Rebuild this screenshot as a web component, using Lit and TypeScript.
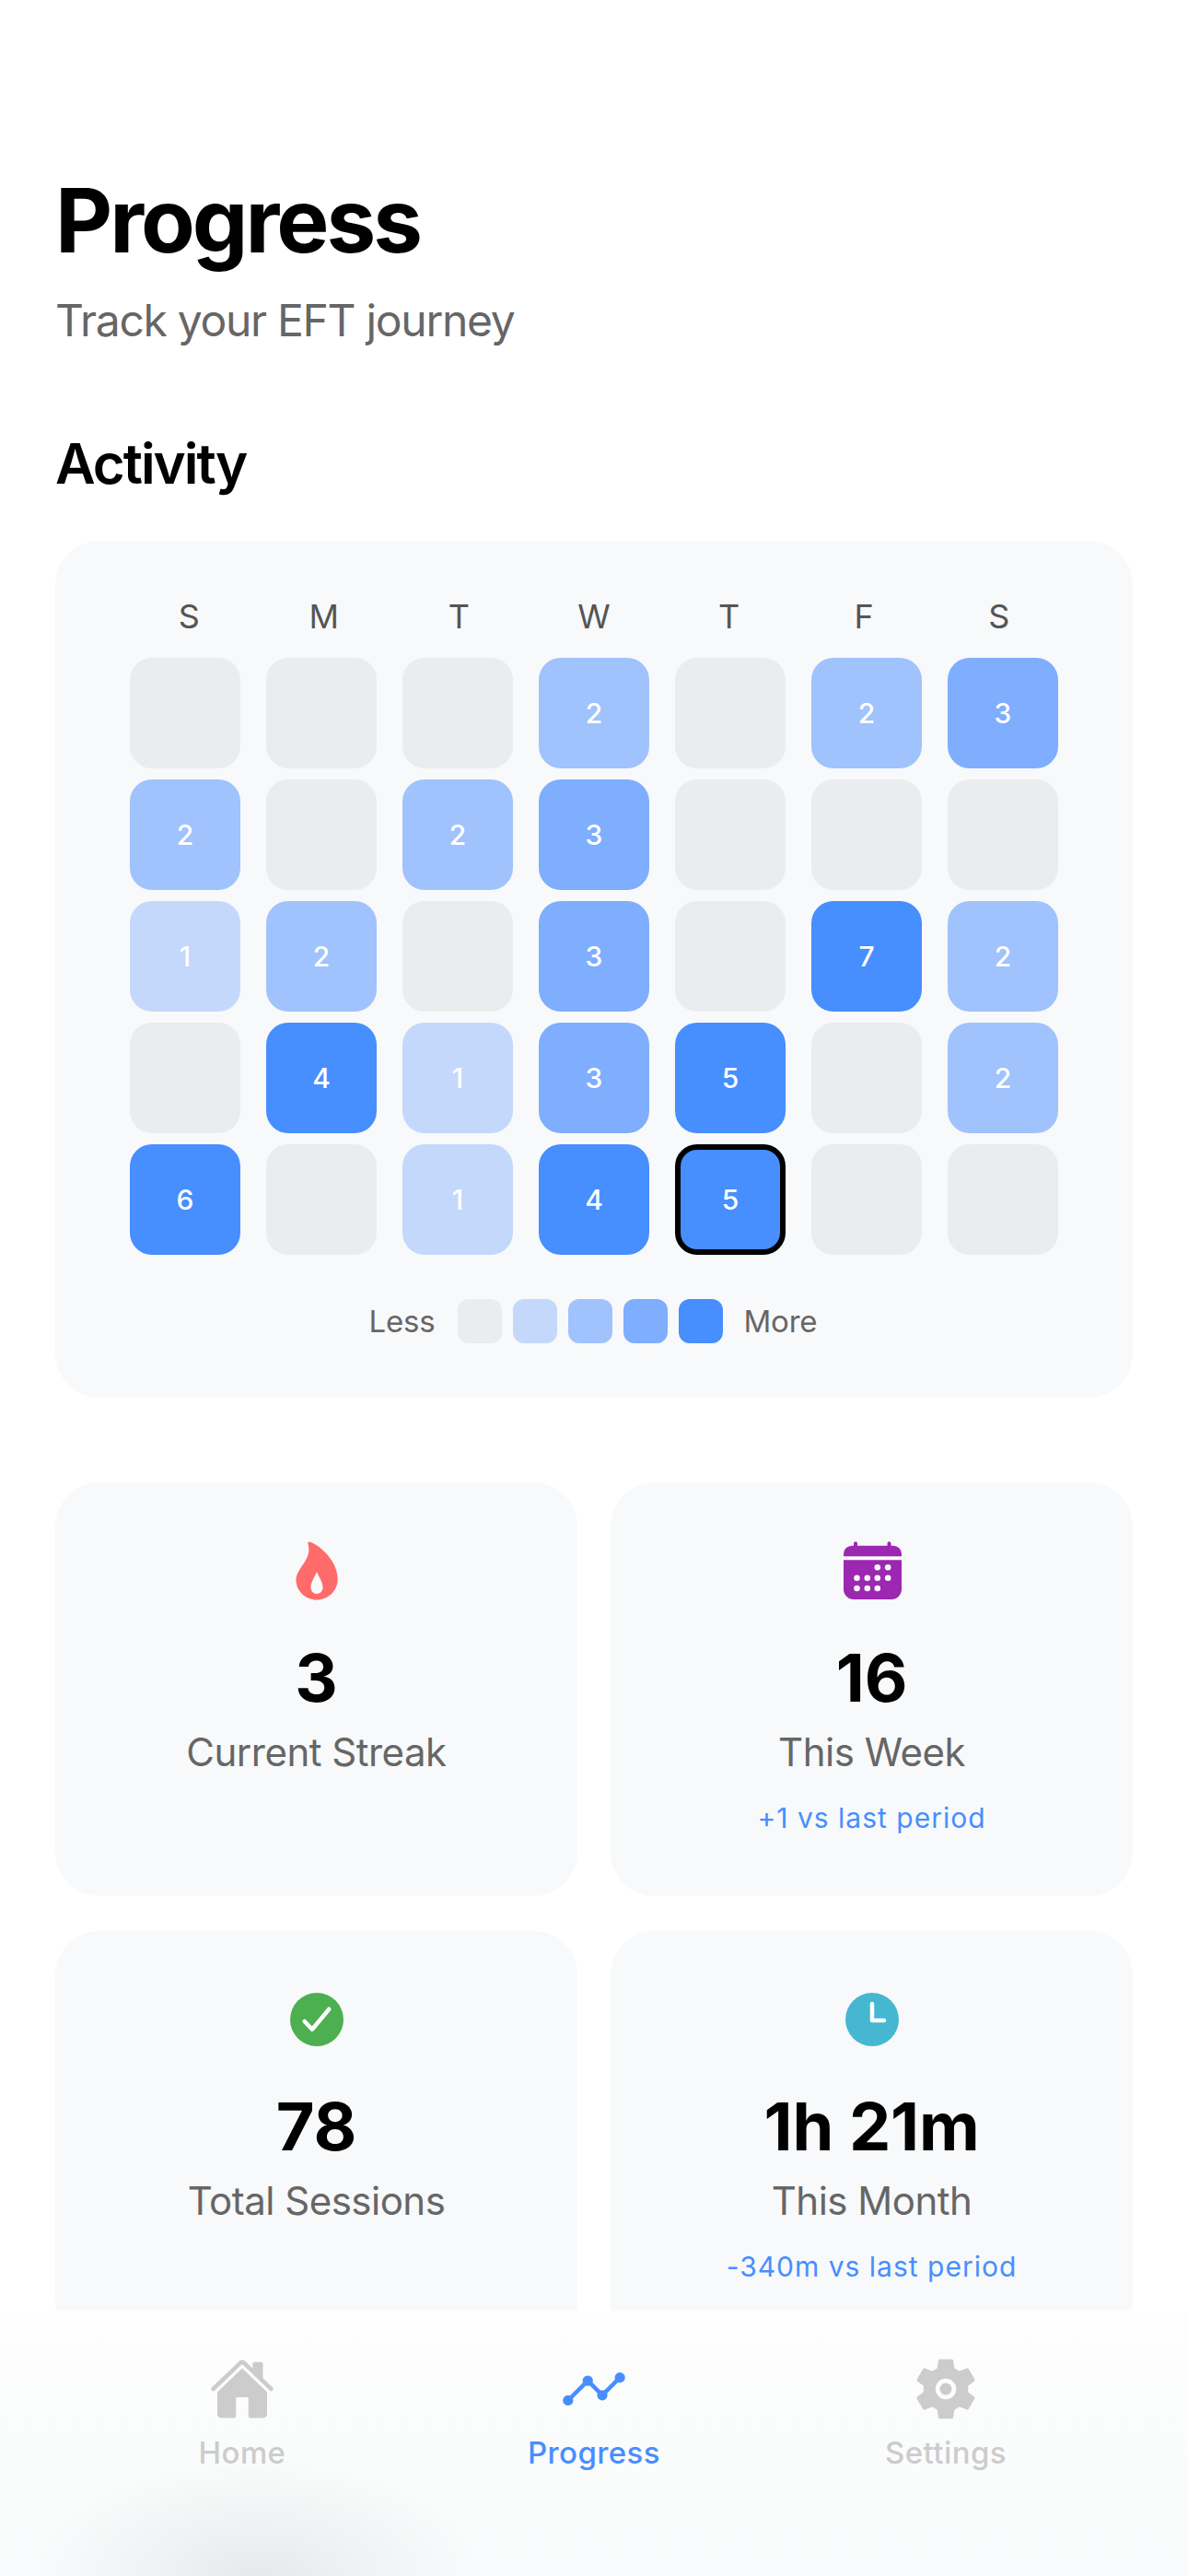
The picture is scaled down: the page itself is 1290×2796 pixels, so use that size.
import { LitElement, css, html, svg } from 'lit';
import { customElement } from 'lit/decorators.js';

const days = ['S', 'M', 'T', 'W', 'T', 'F', 'S'];

const weeks = [
  [0, 0, 0, 2, 0, 2, 3],
  [2, 0, 2, 3, 0, 0, 0],
  [1, 2, 0, 3, 0, 7, 2],
  [0, 4, 1, 3, 5, 0, 2],
  [6, 0, 1, 4, 5, 0, 0],
];

const level = (n: number) => (n > 3 ? 4 : n);

const flame = svg`<path fill="#ff6b6b" fill-rule="evenodd" d="M27 4.5C33 4 58.7 22 58.7 45C58.7 58 48 67.5 36 67.5C24 67.5 13.5 58 13.5 46C13.5 33 30 25 27 9C26.6 6.5 26 4.8 27 4.5ZM36 37C34 42 29.5 48 29.5 54C29.5 58 32.5 61 36 61C39.5 61 42.5 58 42.5 54C42.5 48 38 42 36 37Z"/>`;

const calendarDots = [
  [41.8, 32.3], [53.2, 32.3],
  [19.5, 43.7], [30.8, 43.7], [41.8, 43.7], [53.2, 43.7],
  [19.5, 55], [30.8, 55], [41.8, 55],
];
const calendar = svg`
  <path fill="#9c27b0" d="M5 20.3V17.7A9 9 0 0 1 14 8.7H16V6.3A2 2 0 0 1 20 6.3V8.7H52.5V6.3A2 2 0 0 1 56.5 6.3V8.7H59A9 9 0 0 1 68 17.7V20.3Z"/>
  <path fill="#9c27b0" d="M5 24.3H68V56A11 11 0 0 1 57 67H16A11 11 0 0 1 5 56Z"/>
  ${calendarDots.map(([x, y]) => svg`<circle cx=${x} cy=${y} r="3.3" fill="#f8f9fa"/>`)}
`;

const check = svg`
  <circle cx="36" cy="36" r="29" fill="#4caf50"/>
  <path d="M22.7 38L31 46.7L49.3 24.7" fill="none" stroke="#fff" stroke-width="4.5" stroke-linecap="round" stroke-linejoin="round"/>
`;

const clock = svg`
  <circle cx="36" cy="36" r="29" fill="#45b7d1"/>
  <path d="M36 19V37H49" fill="none" stroke="#fff" stroke-width="4.5" stroke-linecap="round" stroke-linejoin="round"/>
`;

const stats = [
  { icon: flame, value: '3', label: 'Current Streak', change: '' },
  { icon: calendar, value: '16', label: 'This Week', change: '+1 vs last period' },
  { icon: check, value: '78', label: 'Total Sessions', change: '' },
  { icon: clock, value: '1h 21m', label: 'This Month', change: '-340m vs last period' },
];

const homeIcon = svg`
  <path d="M261.56 101.28a8 8 0 00-11.06 0L66.4 277.15a8 8 0 00-2.47 5.79L63.9 448a32 32 0 0032 32H192a16 16 0 0016-16V328a8 8 0 018-8h80a8 8 0 018 8v136a16 16 0 0016 16h96.06a32 32 0 0032-32V282.94a8 8 0 00-2.47-5.79z"/>
  <path d="M490.91 244.15l-74.8-71.56V64a16 16 0 00-16-16h-48a16 16 0 00-16 16v32l-57.92-55.38C272.77 35.14 264.71 32 256 32c-8.68 0-16.72 3.14-22.14 8.63l-212.7 203.5c-6.22 6-7 15.87-1.34 22.37A16 16 0 0043 267.56L250.5 69.28a8 8 0 0111.06 0l207.52 198.28a16 16 0 0022.59-.44c6.14-6.36 5.63-16.86-.76-22.97z"/>
`;

const chartIcon = svg`
  <path d="M344 280l88-88M232 216l64 64M80 320l104-104" fill="none" stroke="currentColor" stroke-width="32" stroke-linecap="round" stroke-linejoin="round"/>
  <circle cx="456" cy="168" r="40"/>
  <circle cx="320" cy="304" r="40"/>
  <circle cx="208" cy="192" r="40"/>
  <circle cx="56" cy="344" r="40"/>
`;

const cogIcon = svg`
  <circle cx="256" cy="256" r="46"/>
  <path fill-rule="evenodd" d="M256 176a80 80 0 1080 80 80.09 80.09 0 00-80-80zm172.72 80a165.53 165.53 0 01-1.64 22.34l48.69 38.12a11.59 11.59 0 012.63 14.78l-46.06 79.52a11.64 11.64 0 01-14.14 4.93l-57.25-23a176.56 176.56 0 01-38.82 22.67l-8.56 60.78a11.93 11.93 0 01-11.51 9.86h-92.12a12 12 0 01-11.51-9.53l-8.56-60.78A169.3 169.3 0 01151.05 393L93.8 416a11.64 11.64 0 01-14.14-4.92L33.6 331.57a11.59 11.59 0 012.63-14.78l48.69-38.12A174.58 174.58 0 0183.28 256a165.53 165.53 0 011.64-22.34l-48.69-38.12a11.59 11.59 0 01-2.63-14.78l46.06-79.52a11.64 11.64 0 0114.14-4.93l57.25 23a176.56 176.56 0 0138.82-22.67l8.56-60.78A11.93 11.93 0 01209.94 26h92.12a12 12 0 0111.51 9.53l8.56 60.78A169.3 169.3 0 01361 119l57.2-23a11.64 11.64 0 0114.14 4.92l46.06 79.52a11.59 11.59 0 01-2.63 14.78l-48.69 38.12a174.58 174.58 0 011.64 22.66z"/>
`;

const tabs = [
  { icon: homeIcon, label: 'Home', active: false },
  { icon: chartIcon, label: 'Progress', active: true },
  { icon: cogIcon, label: 'Settings', active: false },
];

@customElement('app-root')
export class AppRoot extends LitElement {
  render() {
    return html`
      <main class="page">
        <h1>Progress</h1>
        <p class="subtitle">Track your EFT journey</p>
        <h2>Activity</h2>

        <section class="calendar">
          <div class="days">${days.map((d) => html`<span>${d}</span>`)}</div>
          <div class="grid">
            ${weeks.flat().map(
              (n, i) => html`
                <div class="cell l${level(n)} ${i === 32 ? 'today' : ''}">${n || ''}</div>
              `,
            )}
          </div>
          <div class="legend">
            <span class="legend-text less">Less</span>
            ${[0, 1, 2, 3, 4].map((l) => html`<i class="l${l}"></i>`)}
            <span class="legend-text more">More</span>
          </div>
        </section>

        <section class="stats">
          ${stats.map(
            (s) => html`
              <div class="stat">
                <svg class="stat-icon" viewBox="0 0 72 72">${s.icon}</svg>
                <div class="value">${s.value}</div>
                <div class="label">${s.label}</div>
                ${s.change ? html`<div class="change">${s.change}</div>` : ''}
              </div>
            `,
          )}
        </section>
      </main>

      <nav class="tabbar">
        ${tabs.map(
          (t) => html`
            <div class="tab ${t.active ? 'active' : ''}">
              <svg viewBox="0 0 512 512" fill="currentColor">${t.icon}</svg>
              <span>${t.label}</span>
            </div>
          `,
        )}
      </nav>
    `;
  }

  static styles = css`
    * {
      box-sizing: border-box;
    }
    :host {
      display: block;
      position: relative;
      height: 2796px;
      overflow: hidden;
      background: #fff;
      font-family: Inter, 'Liberation Sans', sans-serif;
    }
    .page {
      padding: 181px 60px 0;
    }
    h1 {
      margin: 0;
      font-size: 96px;
      line-height: 116px;
      font-weight: 700;
      letter-spacing: -3px;
      color: #000;
    }
    .subtitle {
      margin: 22px 0 0;
      font-size: 48px;
      line-height: 58px;
      letter-spacing: -1.3px;
      color: #666;
    }
    h2 {
      margin: 90px 0 0;
      font-size: 60px;
      line-height: 72px;
      font-weight: 600;
      letter-spacing: -2px;
      color: #000;
    }

    .calendar {
      margin-top: 48px;
      height: 930px;
      padding: 60px 72px;
      border-radius: 48px;
      background: #f8f9fa;
    }
    .days {
      display: grid;
      grid-template-columns: repeat(7, 1fr);
      height: 44px;
      margin-bottom: 23px;
      font-size: 36px;
      line-height: 44px;
      font-weight: 400;
      color: #555;
      text-align: center;
    }
    .grid {
      display: grid;
      grid-template-columns: repeat(7, 120px);
      grid-auto-rows: 120px;
      gap: 12px 28px;
      justify-content: center;
    }
    .cell {
      display: flex;
      align-items: center;
      justify-content: center;
      border-radius: 24px;
      font-size: 30px;
      font-weight: 500;
      color: #fff;
    }
    .l0 {
      background: #ebecee;
    }
    .l1 {
      background: #c4d8fb;
    }
    .l2 {
      background: #a0c2fd;
    }
    .l3 {
      background: #7eaefd;
    }
    .l4 {
      background: #478eff;
    }
    .today {
      border: 6px solid #000;
    }
    .legend {
      display: flex;
      align-items: center;
      justify-content: center;
      gap: 12px;
      margin-top: 48px;
      padding-right: 2px;
    }
    .legend i {
      width: 48px;
      height: 48px;
      border-radius: 12px;
    }
    .legend-text {
      font-size: 33px;
      letter-spacing: -0.2px;
      color: #666;
    }
    .less {
      margin-right: 12px;
    }
    .more {
      margin-left: 11px;
    }

    .stats {
      display: grid;
      grid-template-columns: 1fr 1fr;
      gap: 38px 36px;
      margin-top: 92px;
    }
    .stat {
      display: flex;
      flex-direction: column;
      align-items: center;
      height: 449px;
      padding-top: 60px;
      border-radius: 48px;
      background: #f8f9fa;
    }
    .stat-icon {
      width: 72px;
      height: 72px;
      flex: none;
    }
    .value {
      margin-top: 37px;
      font-size: 72px;
      line-height: 86px;
      font-weight: 700;
      letter-spacing: -0.2px;
      color: #000;
    }
    .label {
      margin-top: 10px;
      font-size: 42px;
      line-height: 56px;
      letter-spacing: -0.5px;
      color: #666;
    }
    .change {
      margin-top: 23px;
      font-size: 30px;
      line-height: 40px;
      letter-spacing: 1px;
      color: #478eff;
    }

    .tabbar {
      position: absolute;
      left: 0;
      right: 0;
      top: 2508px;
      bottom: 0;
      display: flex;
      justify-content: center;
      padding-top: 49px;
      background:
        radial-gradient(ellipse 250px 130px at 280px 100%, #e7e8e9 0%, #f0f1f2 42%, rgba(248, 249, 250, 0) 100%),
        linear-gradient(180deg, #fefefe 0%, #fbfcfc 35%, #fafbfc 100%);
    }
    .tab {
      display: flex;
      flex-direction: column;
      align-items: center;
      width: 382px;
      color: #ccc;
    }
    .tab.active {
      color: #478eff;
    }
    .tab svg {
      width: 72px;
      height: 72px;
    }
    .tab span {
      margin-top: 13px;
      font-size: 33px;
      line-height: 40px;
      font-weight: 500;
      letter-spacing: 0.4px;
    }
  `;
}

declare global {
  interface HTMLElementTagNameMap {
    'app-root': AppRoot;
  }
}
